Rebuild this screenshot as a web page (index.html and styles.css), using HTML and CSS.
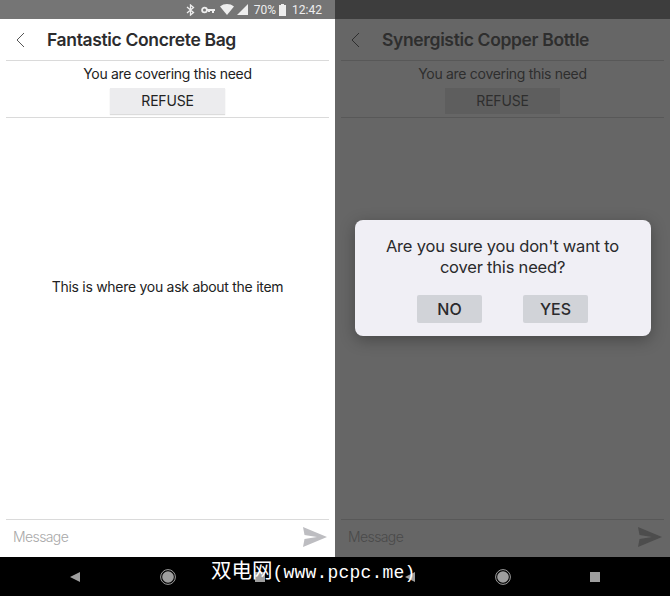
FILE: index.html
```html
<!DOCTYPE html>
<html lang="en">
<head>
    <meta charset="UTF-8">
    <title>Cover this need</title>
    <link rel="stylesheet" href="styles.css">
</head>
<body>
    <div class="screens">
        <!--left phone-->
        <div class="phone">
            <div class="status-bar">
                <svg class="st-icon" width="9" height="12" viewBox="0 0 9 12"><path d="M1 3l6.500 5.500L4.500 11V1l3 2.500L1 9" fill="none" stroke="#eee" stroke-width="1.300"/></svg>
                <svg class="st-icon st-key" width="14" height="8" viewBox="0 0 14 8"><circle cx="3.500" cy="4" r="2.400" fill="none" stroke="#eee" stroke-width="1.800"/><path d="M6 3h8v2h-1v2h-2V5H9v1H7V5H6z" fill="#eee"/></svg>
                <svg class="st-icon st-wifi" width="14" height="11" viewBox="0 0 14 11"><path d="M0 2.500C4-.8 10-.8 14 2.500L7 11z" fill="#eee"/></svg>
                <svg class="st-icon st-signal" width="11" height="11" viewBox="0 0 11 11"><path d="M11 0v11H0z" fill="#eee"/></svg>
                <span class="st-pct">70%</span>
                <svg class="st-icon st-batt" width="7" height="12" viewBox="0 0 7 12"><path d="M2 0h3v1h2v11H0V1h2z" fill="#eee"/></svg>
                <span class="st-time">12:42</span>
            </div>
            <div class="app">
                <div class="top-bar">
                    <svg class="back" width="10" height="16" viewBox="0 0 10 16"><path d="M9 1L2 8l7 7" fill="none" stroke="#555" stroke-width="1"/></svg>
                    <div class="title">Fantastic Concrete Bag</div>
                </div>
                <div class="notice">
                    <div class="notice-text">You are covering this need</div>
                    <a class="refuse-btn">REFUSE</a>
                </div>
                <div class="chat">This is where you ask about the item</div>
                <div class="composer">
                    <span class="placeholder">Message</span>
                    <svg class="send" width="24" height="20" viewBox="0 0 24 20"><path d="M0 0l24 10L0 20l1.500-8L14 10 1.500 8z" fill="#bdbdc1"/></svg>
                </div>
            </div>
            <div class="nav-bar">
                <svg width="10" height="10" viewBox="0 0 10 10"><path d="M10 0v10L0 5z" fill="#9e9e9e"/></svg>
                <svg width="16" height="16" viewBox="0 0 16 16"><circle cx="8" cy="8" r="7.400" fill="none" stroke="#9e9e9e" stroke-width="1"/><circle cx="8" cy="8" r="5.800" fill="#9e9e9e"/></svg>
                <svg class="nav-square" width="10" height="10" viewBox="0 0 10 10"><rect width="10" height="10" fill="#9e9e9e"/></svg>
            </div>
        </div>

        <!--right phone, dimmed behind the dialog-->
        <div class="phone phone-dim">
            <div class="status-bar"></div>
            <div class="app">
                <div class="top-bar">
                    <svg class="back" width="10" height="16" viewBox="0 0 10 16"><path d="M9 1L2 8l7 7" fill="none" stroke="#2e2e2e" stroke-width="1"/></svg>
                    <div class="title">Synergistic Copper Bottle</div>
                </div>
                <div class="notice">
                    <div class="notice-text">You are covering this need</div>
                    <a class="refuse-btn">REFUSE</a>
                </div>
                <div class="chat"></div>
                <div class="composer">
                    <span class="placeholder">Message</span>
                    <svg class="send" width="24" height="20" viewBox="0 0 24 20"><path d="M0 0l24 10L0 20l1.500-8L14 10 1.500 8z" fill="#4d4d4d"/></svg>
                </div>
                <div class="dialog-wrap">
                    <div class="dialog">
                        <div class="dialog-text">Are you sure you don't want to cover this need?</div>
                        <div class="dialog-btns">
                            <a class="dialog-btn">NO</a>
                            <a class="dialog-btn">YES</a>
                        </div>
                    </div>
                </div>
            </div>
            <div class="nav-bar">
                <svg width="10" height="10" viewBox="0 0 10 10"><path d="M10 0v10L0 5z" fill="#9e9e9e"/></svg>
                <svg width="16" height="16" viewBox="0 0 16 16"><circle cx="8" cy="8" r="7.400" fill="none" stroke="#9e9e9e" stroke-width="1"/><circle cx="8" cy="8" r="5.800" fill="#9e9e9e"/></svg>
                <svg class="nav-square" width="10" height="10" viewBox="0 0 10 10"><rect width="10" height="10" fill="#9e9e9e"/></svg>
            </div>
        </div>

        <div class="watermark">双电网<span class="wm-url">(www.pcpc.me)</span></div>
    </div>
</body>
</html>
```

FILE: styles.css
```css
html, body{
    margin:0;
    padding:0;
}
body{
    font-family:Inter, "Liberation Sans", sans-serif;
    background:#000;
}
.screens{
    position:relative;
    display:flex;
    width:670px;
    height:596px;
    overflow:hidden;
}
.phone{
    width:335px;
    display:flex;
    flex-direction:column;
}
.status-bar{
    height:19px;
    flex:none;
    background:#757575;
    color:#eee;
    font-family:Roboto, sans-serif;
    font-size:12px;
    display:flex;
    align-items:center;
    justify-content:flex-end;
    padding-right:13px;
}
.st-key{ margin-left:6px; }
.st-wifi{ margin-left:5px; }
.st-signal{ margin-left:3px; }
.st-pct{ margin-left:6px; }
.st-batt{ margin-left:3px; }
.st-time{ margin-left:6px; }

.app{
    position:relative;
    flex:1;
    display:flex;
    flex-direction:column;
    background:#fff;
    color:#222;
}
.top-bar{
    height:41px;
    margin:0 6px;
    border-bottom:1px solid #dadada;
    display:flex;
    align-items:center;
}
.back{
    margin-left:9px;
}
.title{
    margin-left:22px;
    font-size:17.500px;
    font-weight:600;
    letter-spacing:-0.350px;
    color:#2c2c2e;
}
.notice{
    height:56px;
    margin:0 6px;
    border-bottom:1px solid #dadada;
    display:flex;
    flex-direction:column;
    align-items:center;
}
.notice-text{
    margin-top:5px;
    height:22px;
    line-height:16px;
    font-size:14px;
    letter-spacing:-0.300px;
}
.refuse-btn{
    width:115px;
    height:26px;
    line-height:25px;
    text-align:center;
    font-size:14px;
    letter-spacing:-0.200px;
    background:#ececee;
    box-shadow:0 1px 1px #dcdcdc;
}
.chat{
    flex:1;
    padding-bottom:64px;
    display:flex;
    align-items:center;
    justify-content:center;
    font-size:14px;
    letter-spacing:-0.280px;
}
.composer{
    height:33px;
    margin:0 6px;
    border-top:1px solid #dadada;
    display:flex;
    align-items:center;
    justify-content:space-between;
    padding:0 2px 4px 7px;
}
.placeholder{
    font-size:14px;
    font-weight:300;
    letter-spacing:-0.600px;
    color:#a8a8a8;
}
.send{
    margin-top:1px;
}
.nav-bar{
    height:39px;
    flex:none;
    background:#000;
    display:flex;
    align-items:center;
    padding-left:70px;
    gap:80px;
}
.nav-square{
    margin-left:-1px;
}

/* right phone colours */
.phone-dim .status-bar{
    background:#3d3d3d;
}
.phone-dim .app{
    background:#666;
    color:#2e2e2e;
}
.phone-dim .top-bar,
.phone-dim .notice,
.phone-dim .composer{
    border-color:#585858;
}
.phone-dim .title{
    color:#2e2e2e;
}
.phone-dim .refuse-btn{
    background:#5e5e5e;
    box-shadow:none;
}
.phone-dim .placeholder{
    color:#4a4a4a;
}

.dialog-wrap{
    position:absolute;
    top:0;
    left:0;
    right:0;
    bottom:0;
    padding-bottom:20px;
    box-sizing:border-box;
    display:flex;
    align-items:center;
    justify-content:center;
}
.dialog{
    width:296px;
    height:116px;
    box-sizing:border-box;
    padding-top:16px;
    background:#f0eff5;
    border-radius:8px;
    box-shadow:0 4px 16px rgba(0,0,0,0.3);
}
.dialog-text{
    width:250px;
    margin:0 auto;
    text-align:center;
    font-size:16.500px;
    line-height:21px;
    letter-spacing:-0.200px;
    color:#2a2a2c;
}
.dialog-btns{
    margin-top:17px;
    display:flex;
    justify-content:center;
    gap:41px;
}
.dialog-btn{
    width:65px;
    height:28px;
    line-height:28px;
    text-align:center;
    font-size:16px;
    font-weight:500;
    color:#2a2a2c;
    background:#d1d3d8;
    border-radius:2px;
}

.watermark{
    position:absolute;
    left:211px;
    top:556px;
    height:26px;
    line-height:26px;
    white-space:nowrap;
    color:#fff;
    font-family:"Noto Sans CJK SC", sans-serif;
    font-size:20.500px;
}
.wm-url{
    font-family:"Liberation Mono", monospace;
    font-size:18px;
    letter-spacing:0.200px;
}
```
